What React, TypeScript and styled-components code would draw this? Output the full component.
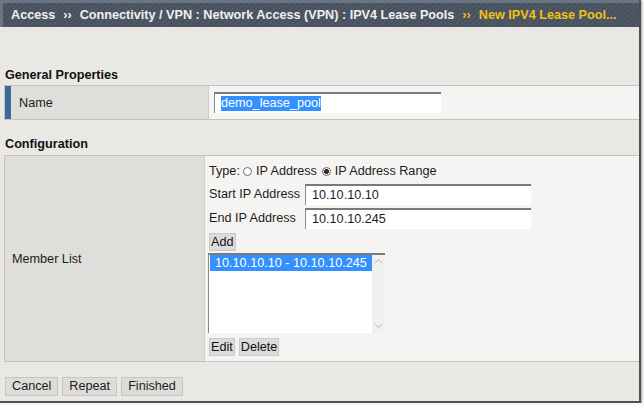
import styled, { createGlobalStyle } from "styled-components";

const GlobalStyle = createGlobalStyle`
  html, body {
    margin: 0;
    padding: 0;
    background: #f7f7f7;
  }
  body {
    font-family: "Liberation Sans", Arial, sans-serif;
  }
`;

export default function App() {
  return (
    <>
      <GlobalStyle />
      <Frame>
        <Header>
          <Crumb>Access</Crumb>
          <Sep>››</Sep>
          <Crumb>Connectivity / VPN : Network Access (VPN) : IPV4 Lease Pools</Crumb>
          <Sep $current>››</Sep>
          <Crumb $current>New IPV4 Lease Pool...</Crumb>
        </Header>

        <SectionTitle $top={41}>General Properties</SectionTitle>
        <PropertyTable $labelWidth={205} $top={2}>
          <LabelCell $accent>Name</LabelCell>
          <ValueCell $padLeft={5}>
            <TextBox $width={227}>
              <Selected>demo_lease_pool</Selected>
            </TextBox>
          </ValueCell>
        </PropertyTable>

        <SectionTitle $top={17}>Configuration</SectionTitle>
        <PropertyTable $labelWidth={201} $top={3}>
          <LabelCell>Member List</LabelCell>
          <MemberCell>
            <TypeLine>
              Type:
              <Radio />
              IP Address
              <Radio $checked />
              IP Address Range
            </TypeLine>
            <FieldGrid>
              <FieldLabel>Start IP Address</FieldLabel>
              <TextBox $width={226}>10.10.10.10</TextBox>
              <FieldLabel>End IP Address</FieldLabel>
              <TextBox $width={226}>10.10.10.245</TextBox>
            </FieldGrid>
            <SmallButton $top={4}>Add</SmallButton>
            <ListBox>
              <Options>
                <Option $selected>10.10.10.10 - 10.10.10.245</Option>
              </Options>
              <ScrollTrack>
                <svg width="9" height="6" viewBox="0 0 9 6">
                  <polyline points="1,5 4.5,1.5 8,5" fill="none" stroke="#b4b4b4" strokeWidth="1" />
                </svg>
                <svg width="9" height="6" viewBox="0 0 9 6">
                  <polyline points="1,1 4.5,4.5 8,1" fill="none" stroke="#b4b4b4" strokeWidth="1" />
                </svg>
              </ScrollTrack>
            </ListBox>
            <ButtonRow>
              <SmallButton>Edit</SmallButton>
              <SmallButton>Delete</SmallButton>
            </ButtonRow>
          </MemberCell>
        </PropertyTable>

        <Footer>
          <FormButton>Cancel</FormButton>
          <FormButton>Repeat</FormButton>
          <FormButton>Finished</FormButton>
        </Footer>
      </Frame>
    </>
  );
}

const Frame = styled.div`
  width: 639px;
  height: 401px;
  background: #e9e8e4;
  border-right: 2px solid #505050;
  border-bottom: 2px solid #505050;
  box-shadow: 1px 1px 2px rgba(0, 0, 0, 0.35);
  display: flex;
  flex-direction: column;
  font-size: 12.65px;
  color: #1c1c1c;
`;

const Header = styled.div`
  height: 24px;
  border-top: 3px solid #6a7684;
  border-left: 3px solid #6a7684;
  padding-left: 8px;
  background: repeating-linear-gradient(135deg, #48525e 0 2px, #4e5965 2px 4px);
  color: #f0f0f0;
  font-weight: bold;
  font-size: 12.65px;
  line-height: 24px;
  white-space: nowrap;
  overflow: hidden;
`;

const Crumb = styled.span<{ $current?: boolean }>`
  color: ${(p) => (p.$current ? "#f3c114" : "#f0f0f0")};
`;

const Sep = styled.span<{ $current?: boolean }>`
  margin: 0 8px;
  color: ${(p) => (p.$current ? "#f3c114" : "#f0f0f0")};
`;

const SectionTitle = styled.div<{ $top: number }>`
  margin-top: ${(p) => p.$top}px;
  padding-left: 5px;
  height: 15px;
  line-height: 15px;
  font-weight: bold;
  font-size: 12.65px;
  color: #111;
`;

const PropertyTable = styled.div<{ $labelWidth: number; $top: number }>`
  margin: ${(p) => p.$top}px 0 0 4px;
  display: grid;
  grid-template-columns: ${(p) => p.$labelWidth}px 1fr;
  border-top: 1px solid #c4c3c0;
  border-bottom: 1px solid #c4c3c0;
`;

const LabelCell = styled.div<{ $accent?: boolean }>`
  display: flex;
  align-items: center;
  border-left: 1px solid #c4c3c0;
  border-right: 1px solid #cfcecb;
  background: #dfdedb;
  padding-left: ${(p) => (p.$accent ? 14 : 7)}px;
  box-shadow: ${(p) => (p.$accent ? "inset 6px 0 0 #3a6a9c" : "none")};
  height: ${(p) => (p.$accent ? 33 : 205)}px;
`;

const ValueCell = styled.div<{ $padLeft: number }>`
  display: flex;
  align-items: center;
  padding-left: ${(p) => p.$padLeft}px;
  background: #f5f4f2;
`;

const TextBox = styled.div<{ $width: number }>`
  box-sizing: border-box;
  width: ${(p) => p.$width}px;
  height: 21px;
  padding-left: 6px;
  background: #fff;
  border-top: 2px solid #7a7a7a;
  border-left: 1px solid #8a8a8a;
  line-height: 18px;
  white-space: nowrap;
`;

const Selected = styled.span`
  display: inline-block;
  background: #3390ff;
  color: #fff;
  line-height: 15px;
  margin-top: 1px;
`;

const MemberCell = styled.div`
  background: #f5f4f2;
  padding: 4px 0 5px 4px;
  display: flex;
  flex-direction: column;
  align-items: flex-start;
`;

const TypeLine = styled.div`
  height: 22px;
  line-height: 22px;
  display: flex;
  align-items: center;
  white-space: nowrap;
`;

const Radio = styled.span<{ $checked?: boolean }>`
  box-sizing: border-box;
  width: 9px;
  height: 9px;
  margin: 1px 4px 0 ${(p) => (p.$checked ? 5 : 3)}px;
  border-radius: 50%;
  border: 1px solid #6b6b6b;
  background: ${(p) => (p.$checked ? "radial-gradient(circle, #2c2c2c 0 2.2px, #fff 2.8px)" : "#fff")};
`;

const FieldGrid = styled.div`
  margin-top: 2px;
  display: grid;
  grid-template-columns: 96px auto;
  row-gap: 3px;
  align-items: center;
`;

const FieldLabel = styled.div`
  line-height: 21px;
  white-space: nowrap;
`;

const SmallButton = styled.div<{ $top?: number }>`
  margin-top: ${(p) => p.$top ?? 0}px;
  height: 18px;
  box-sizing: border-box;
  padding: 0 1px;
  line-height: 16px;
  background: #dcdcdc;
  border: 1px solid #cacaca;
  color: #111;
`;

const ListBox = styled.div`
  margin: 2px 0 0 -1px;
  box-sizing: border-box;
  width: 177px;
  height: 80px;
  display: flex;
  border-top: 2px solid #7a7a7a;
  border-left: 1px solid #8a8a8a;
  background: #fff;
`;

const Options = styled.div`
  flex: 1;
  padding: 0 0 0 1px;
`;

const Option = styled.div<{ $selected?: boolean }>`
  height: 16px;
  line-height: 16px;
  padding-left: 5px;
  background: ${(p) => (p.$selected ? "#3390ff" : "transparent")};
  color: ${(p) => (p.$selected ? "#fff" : "#111")};
  white-space: nowrap;
`;

const ScrollTrack = styled.div`
  width: 13px;
  background: #f0f0f0;
  display: flex;
  flex-direction: column;
  justify-content: space-between;
  align-items: center;
  padding: 3px 0 4px;
`;

const ButtonRow = styled.div`
  margin-top: 5px;
  display: flex;
  gap: 4px;
`;

const Footer = styled.div`
  margin-top: 15px;
  padding-left: 5px;
  display: flex;
  gap: 4px;
`;

const FormButton = styled.div`
  height: 19px;
  box-sizing: border-box;
  padding: 0 6px;
  line-height: 17px;
  background: #dddcda;
  border: 1px solid #c6c6c4;
  color: #1c1c1c;
`;
